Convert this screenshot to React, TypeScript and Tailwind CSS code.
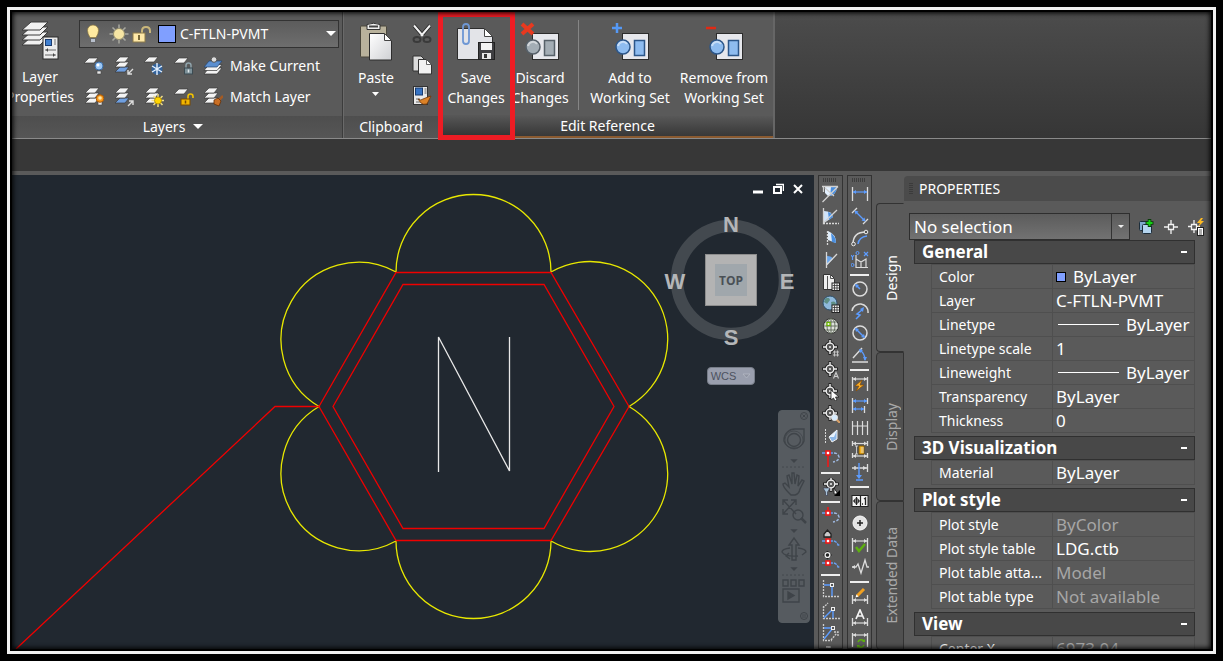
import { useState, type ReactNode } from 'react'

type Row = {
  name: string
  value: string
  muted?: boolean
  swatch?: boolean
  line?: boolean
}

type Section = {
  title: string
  rows: Row[]
}

const SECTIONS: Section[] = [
  {
    title: 'General',
    rows: [
      { name: 'Color', value: 'ByLayer', swatch: true },
      { name: 'Layer', value: 'C-FTLN-PVMT' },
      { name: 'Linetype', value: 'ByLayer', line: true },
      { name: 'Linetype scale', value: '1' },
      { name: 'Lineweight', value: 'ByLayer', line: true },
      { name: 'Transparency', value: 'ByLayer' },
      { name: 'Thickness', value: '0' },
    ],
  },
  { title: '3D Visualization', rows: [{ name: 'Material', value: 'ByLayer' }] },
  {
    title: 'Plot style',
    rows: [
      { name: 'Plot style', value: 'ByColor', muted: true },
      { name: 'Plot style table', value: 'LDG.ctb' },
      { name: 'Plot table atta...', value: 'Model', muted: true },
      { name: 'Plot table type', value: 'Not available', muted: true },
    ],
  },
  { title: 'View', rows: [{ name: 'Center X', value: '6973.04', muted: true }] },
]

const TABS = ['Design', 'Display', 'Extended Data']

/* ---------- ribbon icons ---------- */

function Sheet({ x = 0, y = 0, fill = '#f4f4f4' }: { x?: number; y?: number; fill?: string }) {
  return (
    <path
      d="M5 0h9l-4 5H0z"
      transform={`translate(${x} ${y})`}
      fill={fill}
      stroke="#3a3a3a"
      strokeWidth=".7"
    />
  )
}

function Stack({ blue = -1 }: { blue?: number }) {
  return (
    <>
      {[2, 1, 0].map((i) => (
        <Sheet key={i} x={1} y={1 + i * 5} fill={i === blue ? '#6f9fe0' : '#f4f4f4'} />
      ))}
    </>
  )
}

const LAYER_TOOLS: { label: string; icon: ReactNode }[] = [
  {
    label: 'Off',
    icon: (
      <>
        <Sheet y={2} />
        <path d="M13 15h4v3h-4z" fill="#e8e8e8" stroke="#444" strokeWidth=".6" />
        <circle cx="15" cy="10" r="4" fill="#9cc8f5" stroke="#3d6ea8" />
        <circle cx="14" cy="9" r="1.5" fill="#fff" />
      </>
    ),
  },
  {
    label: 'Isolate',
    icon: (
      <>
        <Stack blue={2} />
        <path d="M19 13l-5 5m0-4v4h4" fill="none" stroke="#ddd" strokeWidth="1.4" />
      </>
    ),
  },
  {
    label: 'Freeze',
    icon: (
      <>
        <Sheet y={1} />
        <circle cx="13" cy="13" r="5.5" fill="#33639c" />
        <path d="M13 7v12M8 10l10 6M18 10l-10 6" stroke="#e4f1ff" strokeWidth="1.4" />
      </>
    ),
  },
  {
    label: 'Lock',
    icon: (
      <>
        <Sheet y={2} />
        <path d="M12 12V9.5a2.5 2.5 0 0 1 5 0V12" fill="none" stroke="#8fa3ab" strokeWidth="1.5" />
        <rect x="10.5" y="12" width="8" height="6" fill="#7d9199" stroke="#3c4b52" />
        <path d="M14.5 13.5v3" stroke="#dfe6ea" strokeWidth="1.5" />
      </>
    ),
  },
  {
    label: 'Turn all on',
    icon: (
      <>
        <Stack />
        <path d="M14 14h4v4h-4z" fill="#e8e8e8" stroke="#444" strokeWidth=".6" />
        <circle cx="16" cy="11.500" r="3.800" fill="#f7981d" stroke="#a95a08" />
        <circle cx="16" cy="11" r="1.800" fill="#ffe9a8" />
      </>
    ),
  },
  {
    label: 'Unisolate',
    icon: (
      <>
        <Stack blue={2} />
        <path d="M14 19l5-5m-4 0h4v4" fill="none" stroke="#ddd" strokeWidth="1.4" />
      </>
    ),
  },
  {
    label: 'Thaw',
    icon: (
      <>
        <Stack />
        <path d="M14 7v13M7.5 13.500h13M9.5 9l9 9M18.5 9l-9 9" stroke="#f3e08c" strokeWidth="1.5" />
        <circle cx="14" cy="13.5" r="3.500" fill="#ffd500" stroke="#a88500" strokeWidth=".8" />
      </>
    ),
  },
  {
    label: 'Unlock',
    icon: (
      <>
        <Sheet y={2} />
        <path d="M14 12V9.500a2.500 2.500 0 0 1 5 0V11" fill="none" stroke="#f2c200" strokeWidth="1.600" />
        <rect x="7" y="12" width="9" height="6" fill="#f2b600" stroke="#7a4b00" />
        <path d="M11.500 13.500v3" stroke="#7a4b00" strokeWidth="1.500" />
      </>
    ),
  },
]

function MakeCurrentIcon() {
  return (
    <svg width="20" height="20" viewBox="0 0 20 20" aria-hidden="true">
      <path d="M6 12h13l-5 6H1z" fill="#f4f4f4" stroke="#333" strokeWidth=".7" />
      <path d="M6 8.500h13l-5 6H1z" fill="#f4f4f4" stroke="#333" strokeWidth=".7" />
      <path d="M6 5h13l-5 6H1z" fill="#5b8fd0" stroke="#27456e" strokeWidth=".7" />
      <circle cx="11" cy="3.500" r="2.800" fill="#ddd" stroke="#555" />
    </svg>
  )
}

function MatchLayerIcon() {
  return (
    <svg width="20" height="20" viewBox="0 0 20 20" aria-hidden="true">
      <Stack />
      <path d="M20 9l-4 4" stroke="#a45a23" strokeWidth="2.500" />
      <path d="M11 13l4-2 3 3-2 5-5-2z" fill="#c96f25" stroke="#663008" strokeWidth=".8" />
    </svg>
  )
}

function LayerPropertiesIcon() {
  return (
    <svg width="38" height="40" viewBox="0 0 38 40" aria-hidden="true">
      {[16, 11, 6, 1].map((y) => (
        <path
          key={y}
          d="M10 0h17l-8 8H1z"
          transform={`translate(0 ${y})`}
          fill="#f1f1f1"
          stroke="#3b3b3b"
        />
      ))}
      <rect x="22" y="16" width="15" height="22" fill="#ececec" stroke="#2b2b2b" />
      <rect x="24.500" y="18.500" width="6" height="6" fill="#3f7fd0" stroke="#1c3d70" />
      <path d="M33 19h2M33 21h2M33 23h2" stroke="#777" />
      <path d="M24 29h11M24 34h11" stroke="#666" />
      <path d="M27 27l-2 2 2 2zM32 32l2 2-2 2z" fill="#444" />
    </svg>
  )
}

function PasteIcon() {
  return (
    <svg width="34" height="40" viewBox="0 0 34 40" aria-hidden="true">
      <defs>
        <linearGradient id="paper" x1="0" y1="0" x2="1" y2="1">
          <stop offset="0" stopColor="#fff" />
          <stop offset="1" stopColor="#cfd0d4" />
        </linearGradient>
      </defs>
      <rect x="1.500" y="4" width="26" height="31" rx="1" fill="#b9b29c" stroke="#4a473c" />
      <path d="M8 2.500q6.500-2.500 13 0v5H8z" fill="#f1f1f1" stroke="#333" />
      <path d="M10 4.500h9" stroke="#444" strokeWidth="2" />
      <path d="M10.500 11.500h15l7 7v19.500h-22z" fill="url(#paper)" stroke="#2d2d2d" />
      <path d="M25.500 11.500v7h7z" fill="#fff" stroke="#444" />
    </svg>
  )
}

function SaveChangesIcon() {
  return (
    <svg width="40" height="40" viewBox="0 0 40 40" aria-hidden="true">
      <path d="M1.500 6.500h27l8 8v23h-35z" fill="#e3e4e8" stroke="#2d2d2d" />
      <path d="M28.500 6.500v8h8z" fill="#fff" stroke="#444" />
      <path
        d="M7 8v11q0 3 3 3t3-3V5q0-3-3-3T7 5v10"
        fill="none"
        stroke="#6e97d4"
        strokeWidth="1.800"
      />
      <rect x="22.500" y="20.500" width="16" height="17" fill="#3f3f42" stroke="#222" />
      <rect x="25" y="21" width="11" height="7" fill="#f3f3f3" />
      <rect x="26" y="31" width="9" height="6" fill="#e6e6e6" />
      <rect x="28" y="32" width="3" height="4" fill="#333" />
    </svg>
  )
}

function ReferenceIcon({ tint, frame, mark }: { tint: string; frame: string; mark: ReactNode }) {
  return (
    <svg width="40" height="40" viewBox="-3 0 40 40" aria-hidden="true">
      <rect x="9.500" y="11.500" width="26" height="26" fill="#e6e7ec" stroke="#2c2c2c" />
      <circle cx="10" cy="25" r="7" fill={tint} stroke={frame} strokeWidth="1.500" />
      <path d="M5 24a5 5 0 0 1 9-2" fill="none" stroke="#fff" strokeOpacity=".5" strokeWidth="2" />
      <rect x="21.500" y="18.500" width="10" height="15" fill={tint} stroke={frame} strokeWidth="1.500" />
      {mark}
    </svg>
  )
}

function CutIcon() {
  return (
    <svg width="20" height="20" viewBox="0 0 20 20" aria-hidden="true">
      <path d="M2 1.500l9 10.500M18 1.500L9 12" stroke="#222" strokeWidth="3.500" />
      <ellipse cx="5" cy="15.500" rx="3.500" ry="2.500" fill="none" stroke="#3a3a3a" strokeWidth="2" />
      <ellipse cx="15" cy="15.500" rx="3.500" ry="2.500" fill="none" stroke="#3a3a3a" strokeWidth="2" />
      <path d="M2 1.500l9 10.500M18 1.500L9 12" stroke="#f2f2f2" strokeWidth="2" />
    </svg>
  )
}

function CopyIcon() {
  return (
    <svg width="20" height="20" viewBox="0 0 20 20" aria-hidden="true">
      <path d="M1 1h8l3 3v12H1z" fill="#dcdcdc" stroke="#333" />
      <path d="M6.500 4.500h8l5 5V19h-13z" fill="#f1f1f1" stroke="#333" />
      <path d="M14.500 4.500v5h5z" fill="#fff" stroke="#444" strokeWidth=".8" />
    </svg>
  )
}

function CopyStyleIcon() {
  return (
    <svg width="20" height="20" viewBox="0 0 20 20" aria-hidden="true">
      <rect x="1.500" y=".500" width="14" height="18" fill="#e9e9e9" stroke="#333" />
      <rect x="3.500" y="2" width="7" height="7" fill="#3673c4" stroke="#183a6d" />
      <path d="M12.500 3h2M12.500 5h2M12.500 7h2M4 13h4M4 16h4" stroke="#666" />
      <path d="M6 13q3 2 5 0l5-2 3-1-2 4-2 4q-4 1-6-1z" fill="#dc8228" stroke="#6d3507" strokeWidth=".8" />
    </svg>
  )
}

/* ---------- vertical toolbars ---------- */

function Dim() {
  return <path d="M1.500 2v14M16.500 2v14" stroke="#dcdcdc" strokeWidth="1.300" />
}

function Arrow({ y, color = '#dcdcdc' }: { y: number; color?: string }) {
  return (
    <>
      <path d={`M2 ${y}h14`} stroke={color} strokeWidth="1.200" />
      <path d={`M2 ${y}l3-2v4zM16 ${y}l-3-2v4z`} fill={color} />
    </>
  )
}

function Target({ x = 9, y = 9 }: { x?: number; y?: number }) {
  return (
    <g transform={`translate(${x} ${y})`}>
      <path d="M-8 0h16M0-8v16" stroke="#222" strokeWidth="3" />
      <circle r="4" fill="#555" stroke="#222" strokeWidth="3" />
      <path d="M-7 0h4M7 0h-4M0-7v4M0 7v-4" stroke="#f2f2f2" strokeWidth="1.400" />
      <circle r="3.800" fill="#555" stroke="#f2f2f2" strokeWidth="1.300" />
      <circle r="1" fill="#f2f2f2" />
    </g>
  )
}

function GripBadge() {
  return (
    <>
      <rect x="10" y="10" width="7.500" height="7.500" fill="#eee" stroke="#222" />
      <path d="M12.500 10.500v7M15 10.500v7M10.500 12.500h7M10.500 15h7" stroke="#333" strokeWidth=".8" />
    </>
  )
}

function SnapCurve({ y = 5 }: { y?: number }) {
  return (
    <>
      <path d={`M0 ${y}h4M8 ${y}h3`} stroke="#6aa0f2" strokeWidth="1.400" />
      <path
        d={`M12 ${y}q4 0 5 4q0 4-6 5`}
        fill="none"
        stroke="#9db6dd"
        strokeWidth="1.400"
        strokeDasharray="3 1.500"
      />
      <rect x="4" y={y - 2} width="4" height="4" fill="#fff" stroke="#f01818" strokeWidth="1.600" />
    </>
  )
}

type ToolItem = ReactNode | 'sep'

const SURFACE_TOOLS: ToolItem[] = [
  <>
    <path d="M3 2h12q-1 9-9 9L3 8z" fill="#e4f1ff" />
    <path d="M9 2h6q-1 8-7 9z" fill="#4a8fe0" />
    <path d="M0 1.500h16M.500 17L16 1.500M1.500 1v6M3 3l9 8" fill="none" stroke="#d0d0d0" strokeWidth="1.300" />
  </>,
  <>
    <path d="M2 4q8 0 9 6l-9 6z" fill="#cfe4fb" />
    <path d="M6 5q4 1 5 5l-4 3z" fill="#4a8fe0" />
    <path d="M1.500 1v15L15 3" fill="none" stroke="#d0d0d0" strokeWidth="1.300" />
    <path d="M1 16.500h16" stroke="#d8d8d8" strokeWidth="1.300" strokeDasharray="2 1" />
  </>,
  <>
    <path d="M6 2q8 3 8 12l-8-3z" fill="#e0eefc" />
    <path d="M9 4q5 4 5 10l-4-1z" fill="#4a8fe0" />
    <path d="M5.500 2v14" stroke="#d8d8d8" strokeWidth="1.300" strokeDasharray="2 1" />
  </>,
  <>
    <path d="M5 5q5 0 6 3l-6 6z" fill="#6aa6ec" />
    <path d="M4.500 1v16M4.500 14L15 3" stroke="#d8d8d8" strokeWidth="1.300" />
  </>,
  <>
    <path d="M1.500 1.500h7l4 4v11h-11z" fill="#eee" stroke="#333" />
    <path d="M5.500 3v13M8.500 1.500v4h4" fill="none" stroke="#555" />
    <GripBadge />
  </>,
  <>
    <circle cx="8" cy="8" r="7" fill="#8fb9dc" stroke="#2d4d66" />
    <path d="M3 4q4-3 5 1l-3 4-3-2zM9 7q5-2 5 3l-4 3z" fill="#5f8f85" />
    <GripBadge />
  </>,
  <>
    <circle cx="9" cy="9" r="7.500" fill="#dfe2dc" stroke="#333" />
    <path d="M9 1.500v15M1.500 9h15M3 5h12M3 13h12" stroke="#5d6858" strokeWidth=".9" />
    <ellipse cx="9" cy="9" rx="4" ry="7.500" fill="none" stroke="#5d6858" strokeWidth=".9" />
    <rect x="5" y="5.500" width="3" height="3" fill="#fff" stroke="#6bb700" strokeWidth="1.300" />
  </>,
  <>
    <Target x={8} y={8} />
    <path d="M12.500 11.500v6M15.500 11.500v6M11 13h6M11 16h6" stroke="#ccc" strokeWidth=".9" />
  </>,
  <>
    <Target x={8} y={8} />
    <path d="M11.500 17.500l2.500-6 2.500 6M12.500 15.500h3" fill="none" stroke="#ccc" strokeWidth="1.100" />
  </>,
  <>
    <Target x={8} y={8} />
    <path d="M9 7v10l2.500-2 1.500 3 2-1-1.500-3H17z" fill="#fff" stroke="#222" strokeWidth=".8" />
  </>,
  <>
    <Target x={8} y={8} />
    <path d="M14 14l4 4" stroke="#d9a066" strokeWidth="2" />
    <circle cx="12.500" cy="12.500" r="3" fill="#d6ecff" stroke="#e8e8e8" />
  </>,
  <>
    <path d="M3.500 2v15" stroke="#d8d8d8" strokeDasharray="2 1" />
    <path d="M7 10l8-7v9l-5 3z" fill="#8db8e8" stroke="#eee" />
    <path d="M7 10l5 0 3-7" fill="#e8f2fc" />
  </>,
  <>
    <path d="M6 4v14" stroke="#f01818" strokeWidth="1.600" />
    <SnapCurve y={4} />
  </>,
  'sep',
  <>
    <Target x={9} y={6} />
    <path d="M1 10h7l-2.500 4v4l-2-1v-3z" fill="#a9c3d9" stroke="#334" strokeWidth=".6" />
    <path d="M12 10v6l4 0z" fill="#fff" stroke="#222" />
    <path d="M18 12v6h-6z" fill="#000" />
  </>,
  'sep',
  <>
    <path d="M6 0v5" stroke="#f01818" strokeWidth="1.600" />
    <SnapCurve y={6} />
  </>,
  <>
    <path d="M2 8V5l3.500-4L9 5v3z" fill="#c9c9c9" stroke="#222" strokeWidth="1.300" />
    <path d="M0 12h4M8 12h3" stroke="#6aa0f2" strokeWidth="1.400" />
    <path d="M12 12q3 1 4 4h2" fill="none" stroke="#6aa0f2" strokeWidth="1.400" strokeDasharray="3 1" />
    <rect x="4" y="10" width="4" height="4" fill="#fff" stroke="#f01818" strokeWidth="1.600" />
  </>,
  <>
    <path d="M5.500-.500L10 4l-4.500 4.500L1 4z" fill="#222" />
    <circle cx="5.500" cy="4" r="2.400" fill="#222" stroke="#eee" strokeWidth="1.400" />
    <path d="M0 12h4M8 12h3" stroke="#6aa0f2" strokeWidth="1.400" />
    <path d="M12 12q3 1 4 4h2" fill="none" stroke="#6aa0f2" strokeWidth="1.400" strokeDasharray="3 1" />
    <rect x="4" y="10" width="4" height="4" fill="#fff" stroke="#f01818" strokeWidth="1.600" />
  </>,
  'sep',
  <>
    <path d="M1.500 0v16.500H18" fill="none" stroke="#ccc" strokeWidth="1.300" strokeDasharray="2 1" />
    <path d="M2 5h8v11" fill="none" stroke="#5c9cff" strokeWidth="1.400" />
    <rect x="8.500" y="3.500" width="3" height="3" fill="#555" stroke="#eee" />
  </>,
  <>
    <path d="M1.500 4v12.500H18M1 6l5-5" fill="none" stroke="#ccc" strokeWidth="1.300" strokeDasharray="2 1" />
    <path d="M2 16l9-9v9" fill="none" stroke="#5c9cff" strokeWidth="1.400" />
    <rect x="9.500" y="5.500" width="3" height="3" fill="#555" stroke="#eee" />
  </>,
  <>
    <path d="M1.500 0v16.500H10M9 16l6-7M12 8h4v4" fill="none" stroke="#ccc" strokeWidth="1.300" strokeDasharray="2 1" />
    <path d="M2 4h9L2 15" fill="none" stroke="#5c9cff" strokeWidth="1.400" />
    <rect x="9.500" y="2.500" width="3" height="3" fill="#555" stroke="#eee" />
  </>,
  <>
    <path d="M1 8l6-6M4 1h4v4" fill="none" stroke="#ccc" strokeWidth="1.300" />
    <rect x="11" y="3" width="3" height="3" fill="none" stroke="#ccc" />
  </>,
]

const DIMENSION_TOOLS: ToolItem[] = [
  <>
    <Dim />
    <Arrow y={7} color="#5c9cff" />
  </>,
  <>
    <path d="M1 6l5-5M12 17l5-5" stroke="#dcdcdc" strokeWidth="1.300" />
    <path d="M5 5l8 8" stroke="#5c9cff" strokeWidth="1.300" />
    <path d="M3.500 3.500l4 1-3 3zM14.500 14.500l-4-1 3-3z" fill="#5c9cff" />
  </>,
  <>
    <path d="M2 15Q2 3 15 3" fill="none" stroke="#dcdcdc" strokeWidth="1.500" />
    <path d="M7 15q1-7 9-8" fill="none" stroke="#5c9cff" strokeWidth="1.500" />
    <circle cx="15" cy="3" r="1.800" fill="#555" stroke="#eee" />
    <circle cx="2.500" cy="15" r="1.800" fill="#555" stroke="#eee" />
  </>,
  <>
    <path d="M5 4v12.500h12M5 8l5 3 5-3v8M10 11v5M15 16V9" fill="none" stroke="#dcdcdc" strokeWidth="1.200" />
    <path d="M0 4l1.500 2L3 4M1.500 6v3M13 1l4 4M17 1l-4 4" stroke="#5c9cff" strokeWidth="1.200" fill="none" />
    <circle cx="6.500" cy="2" r="1.500" fill="none" stroke="#5c9cff" />
    <circle cx="1.500" cy="14" r="1.500" fill="none" stroke="#5c9cff" />
  </>,
  'sep',
  <>
    <circle cx="9" cy="9" r="7" fill="none" stroke="#dcdcdc" strokeWidth="1.500" />
    <path d="M9 9L6 6" stroke="#5c9cff" strokeWidth="1.500" />
    <path d="M4 4l4 1-3 3z" fill="#5c9cff" />
  </>,
  <>
    <path d="M1 9A8 8 0 0 1 17 11" fill="none" stroke="#dcdcdc" strokeWidth="1.500" />
    <path d="M5 17l4-4-3-1 5-4" fill="none" stroke="#5c9cff" strokeWidth="1.500" />
    <path d="M13 5l-1 5-3-3z" fill="#5c9cff" />
  </>,
  <>
    <circle cx="9" cy="9" r="7" fill="none" stroke="#dcdcdc" strokeWidth="1.500" />
    <path d="M5 5l8 8" stroke="#5c9cff" strokeWidth="1.400" />
    <path d="M4 4l4 1-3 3zM14 14l-4-1 3-3z" fill="#5c9cff" />
  </>,
  <>
    <path d="M1 16h16M2 12L11 2" stroke="#dcdcdc" strokeWidth="1.400" />
    <path d="M9 4q5 4 5 10" fill="none" stroke="#5c9cff" strokeWidth="1.400" />
    <path d="M8 3l4 1-3 3zM14 15l-2-4h4z" fill="#5c9cff" />
  </>,
  'sep',
  <>
    <Dim />
    <Arrow y={4} />
    <path d="M11 5l-7 6h4l-3 5 8-6H9z" fill="#ffb52e" stroke="#8a4c00" strokeWidth=".7" />
  </>,
  <>
    <path d="M1.500 1v15M16.500 1v6M13.500 9v7" stroke="#dcdcdc" strokeWidth="1.300" />
    <Arrow y={4} color="#5c9cff" />
    <path d="M2 12h11" stroke="#5c9cff" strokeWidth="1.200" />
    <path d="M2 12l3-2v4zM13 12l-3-2v4z" fill="#5c9cff" />
  </>,
  <>
    <path d="M1.500 2v14M6.500 2v14M11.500 2v14M16.500 2v14M2 7h14" stroke="#dcdcdc" strokeWidth="1.200" />
  </>,
  <>
    <path d="M1.500 0v5M16.500 0v5M1.500 12v5M16.500 12v5" stroke="#dcdcdc" strokeWidth="1.300" />
    <Arrow y={2.500} />
    <Arrow y={15} />
    <rect x="8" y="5" width="5" height="8" fill="#f4b11c" stroke="#7a5200" strokeWidth=".8" />
    <path d="M10 7h3M10 9h3M10 11h3M5.500 5v8M4 5h3M4 13h3" stroke="#ddd" strokeWidth=".8" />
  </>,
  <>
    <path d="M1 5h15M16.500 1v8M4 3v4" stroke="#dcdcdc" strokeWidth="1.300" />
    <path d="M16 5l-4-2v4z" fill="#dcdcdc" />
    <path d="M8 0v13M5 17h7" stroke="#5c9cff" strokeWidth="1.400" />
    <path d="M8 16l-3-4h6z" fill="#5c9cff" />
  </>,
  'sep',
  <>
    <rect x="1" y="3.500" width="16" height="11" fill="#f4f4f4" stroke="#222" />
    <path d="M9.500 4v10M2 9h7M5.500 5v8" stroke="#222" strokeWidth="1.200" />
    <circle cx="5.500" cy="9" r="2.300" fill="none" stroke="#222" />
    <path d="M13 7l1.500-1v7M11 12h1" fill="none" stroke="#222" strokeWidth="1.300" />
  </>,
  <>
    <circle cx="9" cy="9" r="7" fill="#e4e4e4" stroke="#fafafa" />
    <path d="M6 9h6M9 6v6" stroke="#222" strokeWidth="1.500" />
  </>,
  <>
    <Dim />
    <Arrow y={5} />
    <path d="M5 11l3 4 6-7" fill="none" stroke="#5db010" strokeWidth="2.500" />
  </>,
  <>
    <path d="M1 9h4l2-3 3 9 4-13 2 7h2" fill="none" stroke="#dcdcdc" strokeWidth="1.300" />
    <path d="M1 9l3-2v4z" fill="#dcdcdc" />
  </>,
  'sep',
  <>
    <path d="M1.500 8v9M16.500 8v9" stroke="#dcdcdc" strokeWidth="1.300" />
    <Arrow y={13} />
    <path d="M6 9l7-7" stroke="#f0a021" strokeWidth="3" />
    <path d="M4.500 10.500l1-3 2 2z" fill="#fff" />
  </>,
  <>
    <path d="M1.500 9v8M16.500 9v8" stroke="#dcdcdc" strokeWidth="1.300" />
    <Arrow y={14} />
    <path d="M5 10L9 1l4 9M6.500 7h5" fill="none" stroke="#f4f4f4" strokeWidth="1.700" />
  </>,
  <>
    <Dim />
    <Arrow y={4} />
    <path d="M7 11q2-4 6-1M13 14q-2 4-6 1" fill="none" stroke="#5db010" strokeWidth="1.600" />
    <path d="M14 8v3h-3zM6 17v-3h3z" fill="#5db010" />
  </>,
]

function VerticalToolbar({ label, items }: { label: string; items: ToolItem[] }) {
  return (
    <div
      role="toolbar"
      aria-label={label}
      className="flex w-[25px] shrink-0 flex-col items-center overflow-hidden border border-[#333] bg-[#5a5a5a]"
    >
      <div className="my-px flex h-[5px] w-4 shrink-0 items-center">
        <svg width="14" height="4" aria-hidden="true">
          <path d="M0 1h14M0 3h14" stroke="#222" strokeDasharray="1 1" />
        </svg>
      </div>
      {items.map((item, i) =>
        item === 'sep' ? (
          <div key={i} className="flex h-[7px] w-full shrink-0 items-center px-0.5">
            <div className="h-0.5 w-full bg-[#eee]" />
          </div>
        ) : (
          <button key={i} aria-label={`${label} ${i + 1}`} className="flex h-[22px] w-full shrink-0 items-center justify-center">
            <svg width="18" height="18" viewBox="0 0 18 18" aria-hidden="true">
              {item}
            </svg>
          </button>
        ),
      )}
    </div>
  )
}

/* ---------- ribbon ---------- */

function RibbonButton({ icon, lines, className = '' }: { icon: ReactNode; lines: string[]; className?: string }) {
  return (
    <button className={`flex shrink-0 flex-col items-center whitespace-nowrap text-sm leading-5 ${className}`}>
      <span className="mb-1 flex h-[52px] items-center justify-center pt-2">{icon}</span>
      {lines.map((line) => (
        <span key={line}>{line}</span>
      ))}
    </button>
  )
}

function PanelTitle({ children, className = '' }: { children: ReactNode; className?: string }) {
  return (
    <div className={`flex h-[22px] shrink-0 items-center justify-center gap-2 text-sm ${className}`}>
      {children}
    </div>
  )
}

function LayerCombo() {
  return (
    <div className="flex h-7 items-center border border-[#333] bg-linear-to-b from-[#5c5c5c] to-[#6e6e6e] pl-1 pr-0.5">
      <svg width="74" height="22" viewBox="0 0 74 22" aria-hidden="true" className="shrink-0">
        <path d="M9 2a5.500 5.500 0 0 1 5.500 5.500q0 3-2.500 7H6Q3.500 10.500 3.500 7.500A5.500 5.500 0 0 1 9 2z" fill="#ffeaa0" stroke="#8c7842" strokeWidth=".7" />
        <path d="M6.500 15.500h5v4h-5z" fill="#b8c0cc" stroke="#555" strokeWidth=".7" />
        <path d="M35 1.500v19M25.500 11h19M28.500 4.500l13 13M41.500 4.500l-13 13" stroke="#a9a9a0" strokeWidth="1.500" strokeDasharray="4 10 6" />
        <circle cx="35" cy="11" r="5.500" fill="#f7e6a4" stroke="#97906f" />
        <path d="M58 10V8q0-4 4-4t4 4v2" fill="none" stroke="#c9b67a" strokeWidth="2" />
        <rect x="49" y="10" width="12" height="9" fill="#ffe9a8" stroke="#8d7b48" />
        <path d="M55 12v5" stroke="#7a6a3a" strokeWidth="2" />
      </svg>
      <span className="mr-0.5 size-[18px] shrink-0 border border-black bg-[#809fff]" />
      <select
        aria-label="Current layer"
        className="min-w-0 flex-1 appearance-none bg-transparent pl-0.5 text-sm text-white outline-none"
      >
        <option>C-FTLN-PVMT</option>
      </select>
      <svg width="10" height="6" aria-hidden="true">
        <path d="M0 0h10L5 5z" fill="#fff" />
      </svg>
    </div>
  )
}

function Ribbon() {
  return (
    <header className="flex h-[127px] shrink-0 border-b border-[#8a8a8a] bg-linear-to-b from-[#4c4c4c] to-[#363636]">
      {/* Layers */}
      <section aria-label="Layers" className="flex w-[331px] shrink-0 flex-col border-r border-[#3c3c3c] bg-[#5a5a5a]">
        <div className="flex flex-1">
          <RibbonButton icon={<LayerPropertiesIcon />} lines={['Layer', 'Properties']} className="-mt-px w-14" />
          <div className="flex flex-1 flex-col pl-[11px] pr-[3px] pt-2">
            <LayerCombo />
            <div className="mt-[3px] flex">
              <div className="grid grid-cols-[repeat(4,30px)] gap-y-px">
                {LAYER_TOOLS.map((tool) => (
                  <button key={tool.label} aria-label={tool.label} className="flex h-[30px] items-center justify-center">
                    <svg width="20" height="20" viewBox="0 0 20 20" aria-hidden="true">
                      {tool.icon}
                    </svg>
                  </button>
                ))}
              </div>
              <div className="flex flex-col gap-px pl-1 text-sm">
                <button className="flex h-[30px] items-center gap-[7px]">
                  <MakeCurrentIcon />
                  Make Current
                </button>
                <button className="flex h-[30px] items-center gap-[7px]">
                  <MatchLayerIcon />
                  Match Layer
                </button>
              </div>
            </div>
          </div>
        </div>
        <PanelTitle className="bg-linear-to-b from-[#4e4e4e] to-[#565656] pr-2">
          <span>Layers</span>
          <svg width="10" height="6" aria-hidden="true">
            <path d="M0 0h10L5 5z" fill="#fff" />
          </svg>
        </PanelTitle>
      </section>

      {/* Clipboard */}
      <section aria-label="Clipboard" className="flex w-[95px] shrink-0 flex-col border-l border-[#6a6a6a] bg-[#5a5a5a]">
        <div className="flex flex-1 gap-1 pl-3">
          <div className="flex flex-col items-center">
            <RibbonButton icon={<PasteIcon />} lines={['Paste']} className="w-10" />
            <svg width="8" height="5" className="mt-1" aria-hidden="true">
              <path d="M0 0h7L3.500 4z" fill="#fff" />
            </svg>
          </div>
          <div className="flex flex-col gap-[11px] pl-3 pt-3">
            <button aria-label="Cut"><CutIcon /></button>
            <button aria-label="Copy"><CopyIcon /></button>
            <button aria-label="Copy style"><CopyStyleIcon /></button>
          </div>
        </div>
        <PanelTitle className="bg-linear-to-b from-[#4e4e4e] to-[#565656]">Clipboard</PanelTitle>
      </section>

      {/* Edit Reference */}
      <section aria-label="Edit Reference" className="relative flex w-[337px] shrink-0 flex-col border-r-2 border-[#666] bg-[#5a5a5a]">
        <div className="flex flex-1">
          <RibbonButton icon={<SaveChangesIcon />} lines={['Save', 'Changes']} className="w-[76px]" />
          <RibbonButton
            icon={
              <ReferenceIcon
                tint="#a3adb5"
                frame="#566069"
                mark={<path d="M-1 2L10 12M10 2L-1 12" stroke="#e8391f" strokeWidth="4" />}
              />
            }
            lines={['Discard', 'Changes']}
            className="w-[52px]"
          />
          <div className="ml-3 mt-2 h-[90px] w-px bg-[#858585]" />
          <RibbonButton
            icon={
              <ReferenceIcon
                tint="#8ebcf0"
                frame="#2c5689"
                mark={<path d="M4 1v10M-1 6H9" stroke="#5599f5" strokeWidth="2.500" />}
              />
            }
            lines={['Add to', 'Working Set']}
            className="w-[102px]"
          />
          <RibbonButton
            icon={
              <ReferenceIcon
                tint="#8ebcf0"
                frame="#2c5689"
                mark={<path d="M-1 6H9" stroke="#e02a14" strokeWidth="2.500" />}
              />
            }
            lines={['Remove from', 'Working Set']}
            className="w-[86px]"
          />
        </div>
        <PanelTitle className="border-b-2 border-[#8a5a30] bg-linear-to-b from-[#585858] to-[#383838] pl-1">
          Edit Reference
        </PanelTitle>
        {/* callout around the Save Changes button */}
        <div className="absolute -bottom-0.5 left-0 top-0 flex w-[77px] flex-col justify-end border-5 border-[#ed1c24]">
          <div className="h-5 bg-linear-to-b from-[#585858] to-[#363636]" />
        </div>
      </section>
    </header>
  )
}

/* ---------- drawing canvas ---------- */

function Compass() {
  return (
    <svg width="134" height="140" viewBox="664 210 134 140" role="img" aria-label="View cube, top">
      <circle cx="731" cy="280" r="54" fill="none" stroke="#43494f" strokeWidth="12.500" />
      <rect x="705.500" y="254.500" width="51" height="51" fill="#b3b3b3" stroke="#8d8d8d" />
      <rect x="715" y="264" width="32" height="32" fill="#a0a7ac" />
      <g fontFamily="'Liberation Sans', sans-serif" fontWeight="700" textAnchor="middle">
        <text x="731" y="285" fontSize="12" fontFamily="'Open Sans', sans-serif" fill="#4a5056">TOP</text>
        <g fontSize="22" fill="#b4b6b8">
          <text x="731" y="232">N</text>
          <text x="731" y="345">S</text>
          <text x="675" y="289">W</text>
          <text x="787" y="289">E</text>
        </g>
      </g>
    </svg>
  )
}

function NavigationBar() {
  return (
    <div className="rounded border border-[#555b60] bg-[#565b60]">
      <svg width="30" height="211" viewBox="0 0 30 211" fill="none" stroke="#3f4449" strokeWidth="1.400" role="img" aria-label="Navigation bar">
        <circle cx="25" cy="5" r="3.500" strokeWidth="1" />
        <path d="M23.500 3.500l3 3M26.500 3.500l-3 3" strokeWidth="1" />
        <path d="M5 29a11 11 0 0 1 11-11h9v12A10.500 10.500 0 0 1 5 30z" />
        <circle cx="15" cy="29" r="6.500" />
        <circle cx="15" cy="29" r="9" strokeWidth=".7" />
        <path d="M13 49h4l-2 2z" fill="#3f4449" />
        <path d="M3 56h24" strokeDasharray="2 2" strokeWidth=".8" />
        <path d="M10 82q-6-6-6-9l2-1 4 4-2-11 2-1 3 9V62h2l1 11 2-9 2 1-1 10 4-6 2 1-4 8q-1 5-5 6H12z" />
        <path d="M4 89l13 14M17 89L4 103M4 94v-5h5M12 89h5v5M4 98v5h5" />
        <circle cx="19" cy="104" r="5" />
        <path d="M22 107l5 5" strokeWidth="2.500" />
        <path d="M13 119h4l-2 2z" fill="#3f4449" />
        <path d="M13 149v-15h-3l5-7 5 7h-3v15z" />
        <path d="M11 137q-8 1-8 4 3 5 16 4M19 137q8 1 8 4l-4 3M10 142l-3 3 4 3" />
        <path d="M13 157h4l-2 2z" fill="#3f4449" />
        <path d="M3 164h24" strokeDasharray="2 2" strokeWidth=".8" />
        <path d="M4 169h5v6H4zM12 169h5v6h-5zM20 169h5v6h-5zM4 178h16v13H4z" />
        <path d="M9 181v7l6-3.500z" fill="#3f4449" />
        <circle cx="25" cy="205" r="3.500" strokeWidth="1" />
        <path d="M23 204h4M23 206h4" strokeWidth=".8" />
      </svg>
    </div>
  )
}

function DrawingCanvas() {
  return (
    <main className="relative min-w-0 flex-1 overflow-hidden bg-[#212830]">
      <svg className="absolute inset-0 h-full w-full" fill="none" role="img" aria-label="Hexagon drawing with north marker">
        <g transform="translate(-12 -175)" strokeWidth="1.300">
          <path
            stroke="#e8e800"
            d="M396 272A77.500 77.500 0 0 1 551 272A77.500 77.500 0 0 1 629 406.500A77.500 77.500 0 0 1 551 541A77.500 77.500 0 0 1 396 541A77.500 77.500 0 0 1 319 406.500A77.500 77.500 0 0 1 396 272z"
          />
          <path
            stroke="#f00000"
            d="M319 406.500L396 272.500H551L629 406.500L551 540.500H396zM333 406.500L403 284.500H544L614 406.500L544 528.500H403zM319 406.500H275L16 649"
          />
          <path stroke="#e8e8e8" d="M438.500 472V337L509.500 471V337" />
        </g>
      </svg>

      <div className="absolute right-2.5 top-[7px] flex items-center gap-2">
        <button aria-label="Minimize">
          <svg width="12" height="14" aria-hidden="true"><path d="M1 10h10" stroke="#fff" strokeWidth="3" /></svg>
        </button>
        <button aria-label="Restore">
          <svg width="12" height="14" fill="none" stroke="#fff" aria-hidden="true">
            <path d="M4 2.500h7.500V9" strokeWidth="1.500" />
            <path d="M2 5h7v6H2z" strokeWidth="2" />
          </svg>
        </button>
        <button aria-label="Close">
          <svg width="12" height="14" aria-hidden="true"><path d="M2 3l8 8M10 3l-8 8" stroke="#fff" strokeWidth="2" /></svg>
        </button>
      </div>

      <div className="absolute right-4 top-[35px] flex flex-col items-center gap-[17px]">
        <Compass />
        <button className="flex h-[18px] w-12 items-center justify-center gap-1.5 rounded border border-[#777d88] bg-[#9a9fae] font-['Liberation_Sans',sans-serif] text-[11px] text-[#4c5260]">
          WCS
          <svg width="9" height="6" aria-hidden="true">
            <path d="M1 1h7L4.500 5z" fill="#8f94a2" stroke="#b9bdc8" strokeWidth=".7" />
          </svg>
        </button>
      </div>

      <div className="absolute right-1 top-[235px]">
        <NavigationBar />
      </div>
    </main>
  )
}

/* ---------- properties palette ---------- */

function PaletteTabs({ active, onSelect }: { active: string; onSelect: (tab: string) => void }) {
  return (
    <div role="tablist" aria-label="Property tabs" className="flex w-7 shrink-0 flex-col pt-7">
      {TABS.map((tab) => (
        <button
          key={tab}
          role="tab"
          aria-selected={tab === active}
          onClick={() => onSelect(tab)}
          className={`flex h-[149px] w-full shrink-0 items-center justify-center rounded-l border border-[#333] pl-1 ${
            tab === active ? 'border-r-transparent text-white' : 'bg-[#505050] text-[#a8a8a8]'
          }`}
        >
          <span className="rotate-180 text-sm [writing-mode:vertical-rl]">{tab}</span>
        </button>
      ))}
    </div>
  )
}

function PropertySection({ section }: { section: Section }) {
  const [open, setOpen] = useState(true)

  return (
    <section className="mb-[3px]">
      <button
        aria-expanded={open}
        onClick={() => setOpen(!open)}
        className="flex h-6 w-full items-center justify-between border border-[#303030] bg-[#484848] px-[7px] text-[17px] font-bold leading-5"
      >
        <span>{section.title}</span>
        <span className="h-0.5 w-1.5 bg-white" />
      </button>
      {open && (
        <div className="pl-[17px]">
          <table className="w-full table-fixed border-collapse">
            <tbody>
              {section.rows.map((row) => (
                <tr key={row.name} className="h-6">
                  <th
                    scope="row"
                    className="w-[121px] whitespace-nowrap border border-[#4f4f4f] p-0 pl-[7px] text-left text-sm font-normal leading-5"
                  >
                    {row.name}
                  </th>
                  <td
                    className={`whitespace-nowrap border border-[#4f4f4f] p-0 pl-[3px] text-[17px] leading-5 ${
                      row.muted ? 'text-[#a6a6a6]' : 'text-white'
                    }`}
                  >
                    <span className="flex items-center">
                      {row.swatch && <span className="mr-[7px] size-2.5 border border-black bg-[#809fff]" />}
                      {row.line && <span className="ml-0.5 mr-[7px] h-px w-[61px] bg-white" />}
                      {row.value}
                    </span>
                  </td>
                </tr>
              ))}
            </tbody>
          </table>
        </div>
      )}
    </section>
  )
}

function PropertiesPalette() {
  const [tab, setTab] = useState('Design')

  return (
    <aside className="flex w-[335px] shrink-0">
      <PaletteTabs active={tab} onSelect={setTab} />
      <div className="flex min-w-0 flex-1 flex-col">
        <div className="mb-3 mt-px flex h-[25px] shrink-0 items-center gap-1.5 rounded-tl bg-[#4b4b4b] pl-[5px]">
          <svg width="4" height="12" aria-hidden="true">
            <path d="M1 0v12M3 0v12" stroke="#2c2c2c" strokeDasharray="1 1" />
          </svg>
          <h2 className="text-sm">PROPERTIES</h2>
        </div>
        <div className="flex h-[27px] shrink-0 items-center pl-[5px]">
          <div className="flex h-full w-[221px] items-center border border-[#2e2e2e] bg-linear-to-b from-[#5c5c5c] to-[#727272]">
            <select
              aria-label="Selected object"
              className="h-full min-w-0 flex-1 appearance-none bg-transparent pl-1 text-[17px] leading-6 text-white outline-none"
            >
              <option>No selection</option>
            </select>
            <span className="flex h-full w-[18px] items-center justify-center border-l border-[#333]">
              <svg width="6" height="4" aria-hidden="true">
                <path d="M0 0h6L3 3z" fill="#eee" />
              </svg>
            </span>
          </div>
          <div className="flex flex-1 items-center justify-between pl-2 pr-1.5">
            <button aria-label="Toggle PICKADD">
              <svg width="16" height="16" viewBox="0 0 16 16" aria-hidden="true">
                <rect x="1.500" y="2.500" width="9" height="9" rx="1" fill="#7fa9cc" stroke="#1d2d3a" />
                <rect x="4.500" y="5.500" width="9" height="9" rx="1" fill="#b4d4ee" stroke="#1d2d3a" />
                <path d="M11.500 0v8M7.500 4h8" stroke="#0a3d0a" strokeWidth="3.500" />
                <path d="M11.500 1v6M8.500 4h6" stroke="#16d016" strokeWidth="2" />
              </svg>
            </button>
            <button aria-label="Select objects">
              <svg width="14" height="14" viewBox="0 0 14 14" stroke="#f2f2f2" fill="none" aria-hidden="true">
                <path d="M7 0v4.500M7 9.500V14M0 7h4.500M9.500 7H14M4.500 4.500h5v5h-5z" strokeWidth="1.300" />
              </svg>
            </button>
            <button aria-label="Quick select">
              <svg width="18" height="18" viewBox="0 0 18 18" fill="none" aria-hidden="true">
                <path d="M7 2v4M7 11v4M1 8.500h4M9 8.500h4M4.500 6.500h5v5h-5z" stroke="#f2f2f2" strokeWidth="1.300" />
                <path d="M14 0l-4 5h3l-2 4 6-6h-3l2-3z" fill="#ffbb22" />
                <rect x="10.500" y="9.500" width="6" height="8" fill="#fff" stroke="#222" />
                <path d="M12 12h3M12 14h3M12 16h3" stroke="#333" strokeWidth=".8" />
              </svg>
            </button>
          </div>
        </div>
        <div className="min-h-0 flex-1 overflow-hidden pl-2.5 pr-4">
          {SECTIONS.map((section) => (
            <PropertySection key={section.title} section={section} />
          ))}
        </div>
      </div>
    </aside>
  )
}

export default function App() {
  return (
    <div className="h-screen bg-black p-[7px] font-['Noto_Sans',sans-serif] text-white">
      <div className="h-full border-3 border-[#f0f0f0] bg-black p-0.5">
        <div className="relative flex h-full flex-col overflow-hidden bg-[#5a5a5a]">
          <Ribbon />
          <div className="h-8 shrink-0 bg-[#373737]" />
          <div className="h-1 shrink-0 bg-[#5a5a5a]" />
          <div className="flex min-h-0 flex-1 gap-1">
            <DrawingCanvas />
            <VerticalToolbar label="Surface tools" items={SURFACE_TOOLS} />
            <VerticalToolbar label="Dimension tools" items={DIMENSION_TOOLS} />
            <PropertiesPalette />
          </div>
          {/* soft dark edge inside the frame */}
          <div className="pointer-events-none absolute inset-0 shadow-[inset_0_0_5px_1px_#000]" />
        </div>
      </div>
    </div>
  )
}
